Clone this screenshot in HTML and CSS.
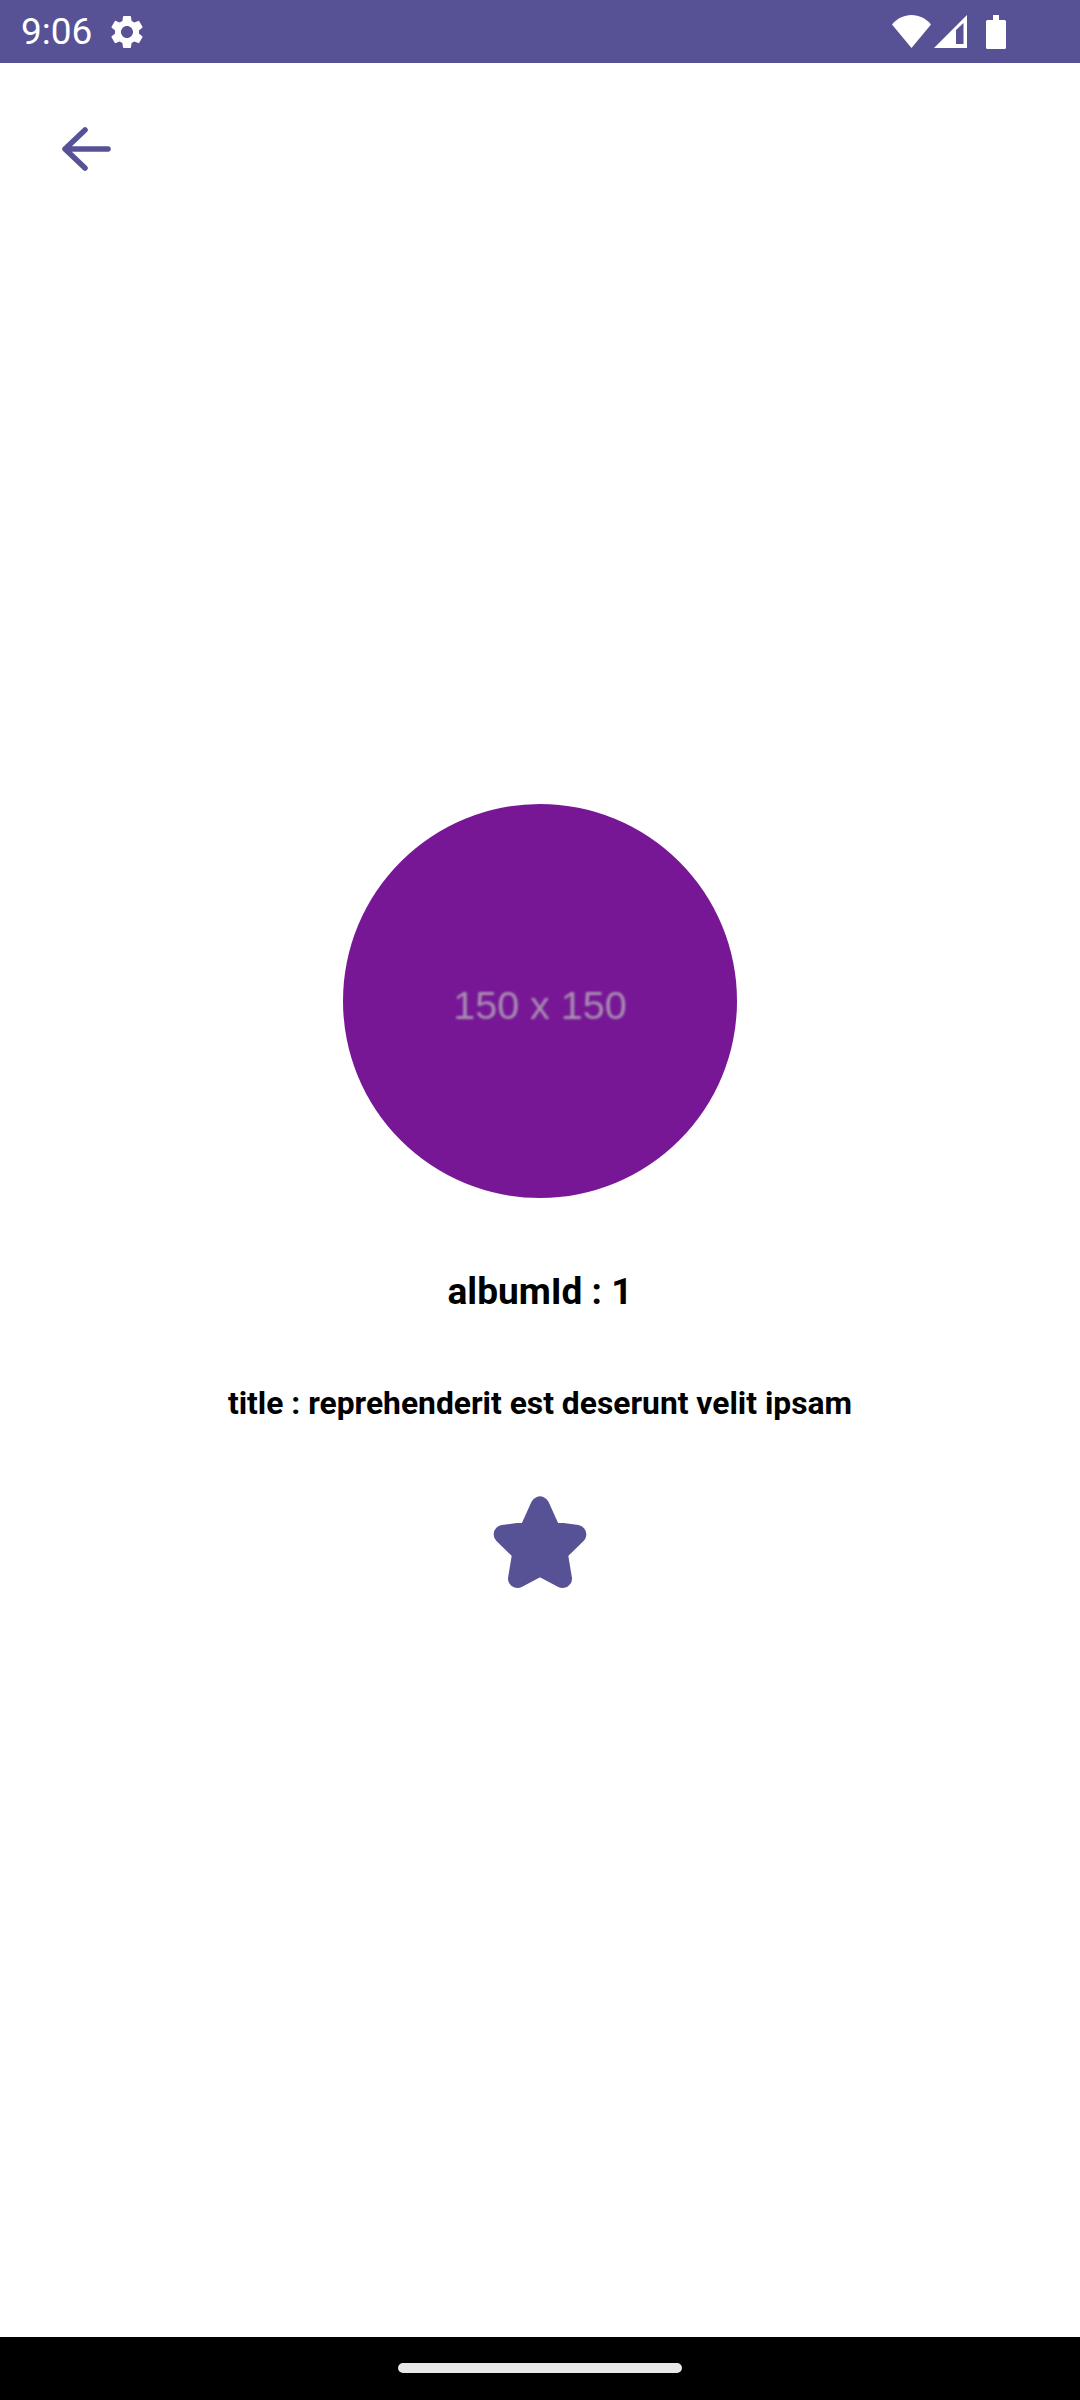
FILE: index.html
```html
<!DOCTYPE html>
<html lang="en">
<head>
    <meta charset="UTF-8">
    <meta name="viewport" content="width=device-width, initial-scale=1.0">
    <title>Album detail</title>
    <link rel="stylesheet" href="styles.css">
</head>
<body>
    <div class="status-bar">
        <span class="clock">9:06</span>
        <svg class="gear" viewBox="0 0 24 24"><path d="M19.14 12.94c.04-.3.06-.61.06-.94 0-.32-.02-.64-.07-.94l2.03-1.58a.49.49 0 0 0 .12-.61l-1.92-3.32a.488.488 0 0 0-.59-.22l-2.39.96c-.5-.38-1.03-.7-1.62-.94l-.36-2.54a.484.484 0 0 0-.48-.41h-3.84c-.24 0-.43.17-.47.41l-.36 2.54c-.59.24-1.13.57-1.62.94l-2.39-.96c-.22-.08-.47 0-.59.22L2.74 8.87c-.12.21-.08.47.12.61l2.03 1.58c-.05.3-.09.63-.09.94s.02.64.07.94l-2.03 1.58a.49.49 0 0 0-.12.61l1.92 3.32c.12.22.37.29.59.22l2.39-.96c.5.38 1.03.7 1.62.94l.36 2.54c.05.24.24.41.48.41h3.84c.24 0 .44-.17.47-.41l.36-2.54c.59-.24 1.13-.56 1.62-.94l2.39.96c.22.08.47 0 .59-.22l1.92-3.32c.12-.22.07-.47-.12-.61l-2.01-1.58zM12 15.6c-1.98 0-3.6-1.62-3.6-3.6s1.62-3.6 3.6-3.6 3.6 1.62 3.6 3.6-1.62 3.6-3.6 3.6z"/></svg>
        <div class="status-icons">
            <svg class="wifi" viewBox="0 0 39 33"><path d="M0 9.500C5 3.500 12 0 19.500 0S34 3.500 39 9.500L19.500 33z"/></svg>
            <svg class="signal" viewBox="0 0 33 33"><path fill-rule="evenodd" d="M33 0V33H0zM29.500 8L22 15V29H29.500z"/></svg>
            <svg class="battery" viewBox="0 0 20 34"><path d="M7 0H13V5H18.500Q20 5 20 6.500V32.500Q20 34 18.500 34H1.500Q0 34 0 32.500V6.500Q0 5 1.500 5H7z"/></svg>
        </div>
    </div>

    <div class="page">
        <div class="top-bar">
            <svg class="back" viewBox="0 0 52 46"><path d="M25 4L5 23L25 42M5 23H48"/></svg>
        </div>
        <div class="detail">
            <div class="thumb"><span>150 x 150</span></div>
            <p class="album-id">albumId : 1</p>
            <p class="album-title">title : reprehenderit est deserunt velit ipsam</p>
            <svg class="star" viewBox="0 0 420 390"><polygon points="210,107 244,182 321,193 265,248 278,326 210,290 142,326 155,248 99,193 176,182"/></svg>
        </div>
    </div>

    <div class="nav-strip">
        <div class="home-handle"></div>
    </div>
</body>
</html>
```

FILE: styles.css
```css
html, body {
    height: 100%;
}
body {
    margin: 0;
    display: flex;
    flex-direction: column;
    font-family: Roboto, Arial, sans-serif;
    background-color: white;
    color: black;
}
p {
    margin: 0;
}
svg {
    display: block;
    flex-shrink: 0;
}
.status-bar {
    height: 63px;
    display: flex;
    align-items: center;
    padding-left: 21px;
    background-color: #575195;
    color: white;
}
.clock {
    font-size: 37px;
    line-height: 63px;
    width: 71px;
}
.gear {
    width: 40px;
    height: 40px;
    margin-left: 15px;
    fill: white;
}
.status-icons {
    margin-left: auto;
    margin-right: 74px;
    display: flex;
    align-items: center;
    fill: white;
}
.wifi {
    width: 39px;
    height: 33px;
}
.signal {
    width: 33px;
    height: 33px;
    margin-left: 3px;
}
.battery {
    width: 20px;
    height: 34px;
    margin-left: 19px;
}
.page {
    flex: 1;
    display: flex;
    flex-direction: column;
}
.top-bar {
    padding: 63px 0 0 60px;
}
.back {
    width: 52px;
    height: 46px;
    fill: none;
    stroke: #575195;
    stroke-width: 5.500;
    stroke-linecap: round;
    stroke-linejoin: round;
}
.detail {
    margin-top: 632px;
    display: flex;
    flex-direction: column;
    align-items: center;
}
.thumb {
    width: 394px;
    height: 394px;
    border-radius: 50%;
    background-color: #771796;
    display: flex;
    align-items: center;
    justify-content: center;
}
.thumb span {
    font-family: "Liberation Sans", Arial, sans-serif;
    font-size: 39.500px;
    color: #a98fb3;
    padding-top: 9px;
    filter: blur(0.8px);
}
.album-id {
    margin-top: 74px;
    font-size: 37px;
    line-height: 40px;
    font-weight: 700;
}
.album-title {
    margin-top: 73px;
    font-size: 31.800px;
    line-height: 36px;
    font-weight: 700;
}
.star {
    width: 140px;
    height: 130px;
    margin-top: 49px;
    fill: #575195;
    stroke: #575195;
    stroke-width: 56;
    stroke-linejoin: round;
}
.nav-strip {
    height: 63px;
    background-color: black;
    display: flex;
    justify-content: center;
    padding-top: 26px;
    box-sizing: border-box;
}
.home-handle {
    width: 284px;
    height: 10px;
    border-radius: 5px;
    background-color: #e8e8e8;
}
```
